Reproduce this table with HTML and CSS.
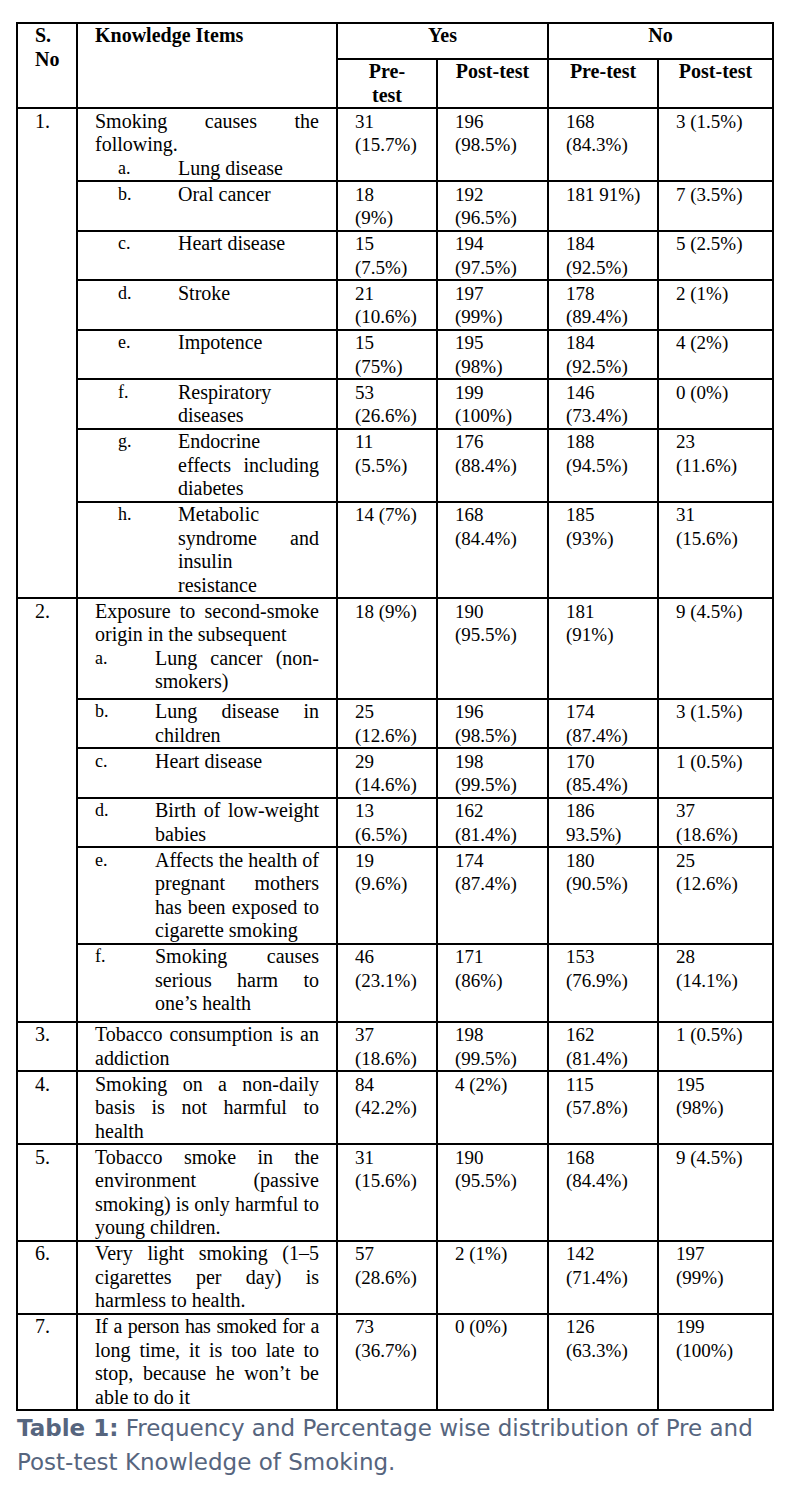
FILE: index.html
```html
<!DOCTYPE html>
<html lang="en">
<head>
<meta charset="utf-8">
<title>Table 1</title>
<link rel="stylesheet" href="styles.css">
</head>
<body>
<div class="page">
<table class="kt">
<colgroup>
<col class="c-sno"><col class="c-item"><col class="c-ypre"><col class="c-ypost"><col class="c-npre"><col class="c-npost">
</colgroup>
<thead>
<tr>
<th rowspan="2" class="sno">S.<br>No</th>
<th rowspan="2" class="item">Knowledge Items</th>
<th colspan="2" class="grp">Yes</th>
<th colspan="2" class="grp">No</th>
</tr>
<tr>
<th class="sub">Pre-<br>test</th>
<th class="sub">Post-test</th>
<th class="sub">Pre-test</th>
<th class="sub">Post-test</th>
</tr>
</thead>
<tbody>
<tr>
<td rowspan="8" class="sno">1.</td>
<td class="item"><span class="jl">Smoking causes the</span><span class="ln">following.</span><div class="si g1"><span class="lt">a.</span><div class="lbl"><span class="ln">Lung disease</span></div></div></td>
<td class="num">31<br>(15.7%)</td><td class="num">196<br>(98.5%)</td><td class="num">168<br>(84.3%)</td><td class="num">3 (1.5%)</td>
</tr>
<tr>
<td class="item"><div class="si g1"><span class="lt">b.</span><div class="lbl"><span class="ln">Oral cancer</span></div></div></td>
<td class="num">18<br>(9%)</td><td class="num">192<br>(96.5%)</td><td class="num">181 91%)</td><td class="num">7 (3.5%)</td>
</tr>
<tr>
<td class="item"><div class="si g1"><span class="lt">c.</span><div class="lbl"><span class="ln">Heart disease</span></div></div></td>
<td class="num">15<br>(7.5%)</td><td class="num">194<br>(97.5%)</td><td class="num">184<br>(92.5%)</td><td class="num">5 (2.5%)</td>
</tr>
<tr>
<td class="item"><div class="si g1"><span class="lt">d.</span><div class="lbl"><span class="ln">Stroke</span></div></div></td>
<td class="num">21<br>(10.6%)</td><td class="num">197<br>(99%)</td><td class="num">178<br>(89.4%)</td><td class="num">2 (1%)</td>
</tr>
<tr>
<td class="item"><div class="si g1"><span class="lt">e.</span><div class="lbl"><span class="ln">Impotence</span></div></div></td>
<td class="num">15<br>(75%)</td><td class="num">195<br>(98%)</td><td class="num">184<br>(92.5%)</td><td class="num">4 (2%)</td>
</tr>
<tr>
<td class="item"><div class="si g1"><span class="lt">f.</span><div class="lbl"><span class="ln">Respiratory</span><span class="ln">diseases</span></div></div></td>
<td class="num">53<br>(26.6%)</td><td class="num">199<br>(100%)</td><td class="num">146<br>(73.4%)</td><td class="num">0 (0%)</td>
</tr>
<tr>
<td class="item"><div class="si g1"><span class="lt">g.</span><div class="lbl"><span class="ln">Endocrine</span><span class="jl">effects including</span><span class="ln">diabetes</span></div></div></td>
<td class="num">11<br>(5.5%)</td><td class="num">176<br>(88.4%)</td><td class="num">188<br>(94.5%)</td><td class="num">23<br>(11.6%)</td>
</tr>
<tr>
<td class="item"><div class="si g1"><span class="lt">h.</span><div class="lbl"><span class="ln">Metabolic</span><span class="jl">syndrome and</span><span class="ln">insulin</span><span class="ln">resistance</span></div></div></td>
<td class="num">14 (7%)</td><td class="num">168<br>(84.4%)</td><td class="num">185<br>(93%)</td><td class="num">31<br>(15.6%)</td>
</tr>
<tr class="pad-4">
<td rowspan="6" class="sno">2.</td>
<td class="item"><span class="jl">Exposure to second-smoke</span><span class="ln">origin in the subsequent</span><div class="si g2"><span class="lt">a.</span><div class="lbl"><span class="jl">Lung cancer (non-</span><span class="ln">smokers)</span></div></div></td>
<td class="num">18 (9%)</td><td class="num">190<br>(95.5%)</td><td class="num">181<br>(91%)</td><td class="num">9 (4.5%)</td>
</tr>
<tr>
<td class="item"><div class="si g2"><span class="lt">b.</span><div class="lbl"><span class="jl">Lung disease in</span><span class="ln">children</span></div></div></td>
<td class="num">25<br>(12.6%)</td><td class="num">196<br>(98.5%)</td><td class="num">174<br>(87.4%)</td><td class="num">3 (1.5%)</td>
</tr>
<tr>
<td class="item"><div class="si g2"><span class="lt">c.</span><div class="lbl"><span class="ln">Heart disease</span></div></div></td>
<td class="num">29<br>(14.6%)</td><td class="num">198<br>(99.5%)</td><td class="num">170<br>(85.4%)</td><td class="num">1 (0.5%)</td>
</tr>
<tr>
<td class="item"><div class="si g2"><span class="lt">d.</span><div class="lbl"><span class="jl">Birth of low-weight</span><span class="ln">babies</span></div></div></td>
<td class="num">13<br>(6.5%)</td><td class="num">162<br>(81.4%)</td><td class="num">186<br>93.5%)</td><td class="num">37<br>(18.6%)</td>
</tr>
<tr>
<td class="item"><div class="si g2"><span class="lt">e.</span><div class="lbl"><span class="jl">Affects the health of</span><span class="jl">pregnant mothers</span><span class="jl">has been exposed to</span><span class="ln">cigarette smoking</span></div></div></td>
<td class="num">19<br>(9.6%)</td><td class="num">174<br>(87.4%)</td><td class="num">180<br>(90.5%)</td><td class="num">25<br>(12.6%)</td>
</tr>
<tr class="pad-5">
<td class="item"><div class="si g2"><span class="lt">f.</span><div class="lbl"><span class="jl">Smoking causes</span><span class="jl">serious harm to</span><span class="ln">one’s health</span></div></div></td>
<td class="num">46<br>(23.1%)</td><td class="num">171<br>(86%)</td><td class="num">153<br>(76.9%)</td><td class="num">28<br>(14.1%)</td>
</tr>
<tr>
<td class="sno">3.</td>
<td class="item"><span class="jl">Tobacco consumption is an</span><span class="ln">addiction</span></td>
<td class="num">37<br>(18.6%)</td><td class="num">198<br>(99.5%)</td><td class="num">162<br>(81.4%)</td><td class="num">1 (0.5%)</td>
</tr>
<tr>
<td class="sno">4.</td>
<td class="item"><span class="jl">Smoking on a non-daily</span><span class="jl">basis is not harmful to</span><span class="ln">health</span></td>
<td class="num">84<br>(42.2%)</td><td class="num">4 (2%)</td><td class="num">115<br>(57.8%)</td><td class="num">195<br>(98%)</td>
</tr>
<tr>
<td class="sno">5.</td>
<td class="item"><span class="jl">Tobacco smoke in the</span><span class="jl">environment (passive</span><span class="jl">smoking) is only harmful to</span><span class="ln">young children.</span></td>
<td class="num">31<br>(15.6%)</td><td class="num">190<br>(95.5%)</td><td class="num">168<br>(84.4%)</td><td class="num">9 (4.5%)</td>
</tr>
<tr>
<td class="sno">6.</td>
<td class="item"><span class="jl">Very light smoking (1–5</span><span class="jl">cigarettes per day) is</span><span class="ln">harmless to health.</span></td>
<td class="num">57<br>(28.6%)</td><td class="num">2 (1%)</td><td class="num">142<br>(71.4%)</td><td class="num">197<br>(99%)</td>
</tr>
<tr>
<td class="sno">7.</td>
<td class="item"><span class="jl tight">If a person has smoked for a</span><span class="jl">long time, it is too late to</span><span class="jl">stop, because he won’t be</span><span class="ln">able to do it</span></td>
<td class="num">73<br>(36.7%)</td><td class="num">0 (0%)</td><td class="num">126<br>(63.3%)</td><td class="num">199<br>(100%)</td>
</tr>
</tbody>
</table>
<p class="caption"><b>Table 1:</b> Frequency and Percentage wise distribution of Pre and<br>Post-test Knowledge of Smoking.</p>
</div>
</body>
</html>
```

FILE: styles.css
```css
html, body {
  margin: 0;
  padding: 0;
  background: #ffffff;
}

.page {
  padding: 22px 14px 0 16px;
}

.kt {
  border-collapse: collapse;
  table-layout: fixed;
  width: 758px;
  font-family: "Liberation Serif", "Times New Roman", serif;
  font-size: 20px;
  line-height: 23.5px;
  color: #000;
}

.c-sno { width: 60px; }
.c-item { width: 260px; }
.c-ypre { width: 100px; }
.c-ypost { width: 111px; }
.c-npre { width: 110px; }
.c-npost { width: 115px; }

.kt th,
.kt td {
  border: 2px solid #000;
  vertical-align: top;
  text-align: left;
  padding: 0.5px 0 0 17px;
}

.kt th {
  font-weight: bold;
  padding-top: 0;
}

.kt th.grp {
  text-align: center;
  padding: 0 0 10.5px 0;
}

.kt th.sub {
  text-align: center;
  padding: 0;
}

.kt th.item,
.kt td.item {
  padding-right: 17px;
}

.kt td.num {
  font-size: 19px;
}

.pad-4 > td { padding-bottom: 4px; }
.pad-5 > td { padding-bottom: 5px; }

.jl,
.ln {
  display: block;
  white-space: nowrap;
}

.jl {
  text-align: justify;
  text-align-last: justify;
}

.tight {
  letter-spacing: -0.35px;
}

.si {
  display: flex;
}

.si.g1 {
  padding-left: 23px;
}

.si .lt {
  flex: 0 0 60px;
  font-size: 18px;
}

.si .lbl {
  flex: 1 1 auto;
  min-width: 0;
}

.caption {
  margin: 0;
  padding-left: 1px;
  font-family: "DejaVu Sans", "Open Sans", sans-serif;
  font-size: 23px;
  line-height: 34px;
  color: #56657e;
}

.caption b {
  font-weight: bold;
}
```
